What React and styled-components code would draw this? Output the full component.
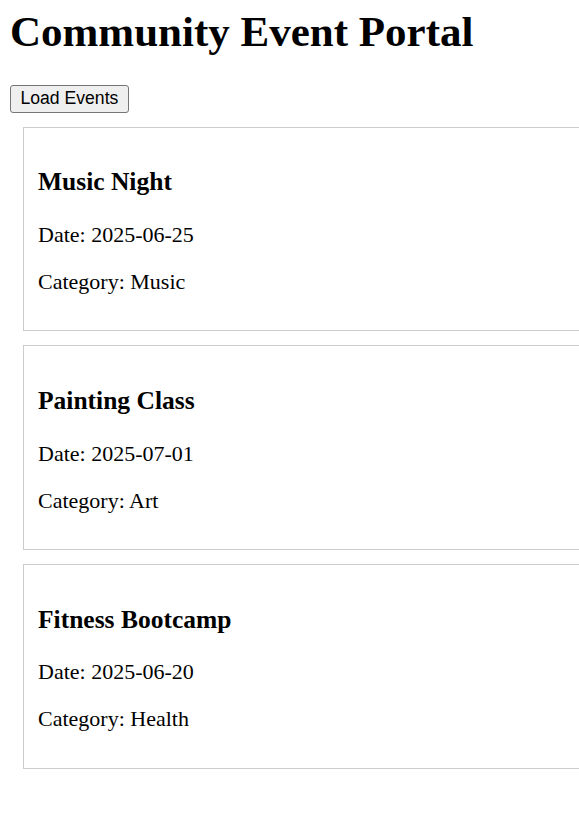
import React from "react";
import styled, { createGlobalStyle } from "styled-components";

const GlobalStyle = createGlobalStyle`
  html, body {
    overflow-x: hidden;
  }
  body {
    margin: 0;
    background: #ffffff;
    color: #000000;
    font-family: "Liberation Serif", "Times New Roman", serif;
  }
`;

const Page = styled.div`
  padding: 7px 10px 20px 10px;
`;

const Title = styled.h1`
  margin: 0 0 28.6px 0;
  font-size: 43px;
  font-weight: bold;
  font-family: "Liberation Serif", "Times New Roman", serif;
`;

const LoadButton = styled.button`
  display: inline-block;
  font-family: "Liberation Sans", Arial, sans-serif;
  font-size: 17.6px;
  padding: 2.6px 9.5px;
  color: #000;
  background: #efefef;
  border: 1px solid #767676;
  border-radius: 3px;
  cursor: pointer;
`;

const List = styled.div`
  display: flow-root;
`;

const Card = styled.div`
  width: 100%;
  margin: 14px 13px;
  padding: 14px;
  border: 1px solid #cccccc;
`;

const CardTitle = styled.h3`
  margin: 25.5px 0;
  font-size: 25.5px;
  line-height: 29.2px;
  font-weight: bold;
`;

const Line = styled.p`
  margin: 22px 0;
  font-size: 22px;
  line-height: 25.2px;
`;

const events = [
  { name: "Music Night", date: "2025-06-25", category: "Music" },
  { name: "Painting Class", date: "2025-07-01", category: "Art" },
  { name: "Fitness Bootcamp", date: "2025-06-20", category: "Health" },
];

export default function App() {
  return (
    <>
      <GlobalStyle />
      <Page>
        <Title>Community Event Portal</Title>
        <LoadButton>Load Events</LoadButton>
        <List>
          {events.map((e) => (
            <Card key={e.name}>
              <CardTitle>{e.name}</CardTitle>
              <Line>Date: {e.date}</Line>
              <Line>Category: {e.category}</Line>
            </Card>
          ))}
        </List>
      </Page>
    </>
  );
}
